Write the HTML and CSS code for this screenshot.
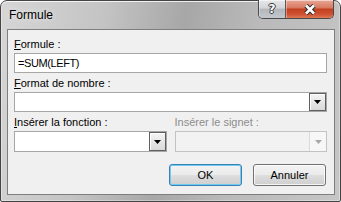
FILE: index.html
```html
<!DOCTYPE html>
<html>
<head>
  <title>Formule</title>
  <link rel="stylesheet" href="styles.css">
</head>
<body>
  <div class="window">
    <div class="titlebar">
      <span class="title">Formule</span>
      <div class="caption-buttons">
        <button class="cap-btn help">?</button>
        <button class="cap-btn close">
          <svg width="14" height="11" viewBox="0 0 14 11">
            <path d="M3 1.5L11 9.5M11 1.5L3 9.5" stroke="#2b2b2b" stroke-width="4.6" fill="none"/>
            <path d="M3 1.5L11 9.5M11 1.5L3 9.5" stroke="#ffffff" stroke-width="2.6" fill="none"/>
          </svg>
        </button>
      </div>
    </div>
    <div class="client">
      <label class="field-label"><u>F</u>ormule :</label>
      <input class="textbox" type="text" value="=SUM(LEFT)">
      <label class="field-label"><u>F</u>ormat de nombre :</label>
      <div class="combo">
        <span class="combo-btn">
          <svg width="7" height="4" viewBox="0 0 7 4"><path d="M0 0h7L3.5 4z" fill="#000"/></svg>
        </span>
      </div>
      <div class="pair">
        <div>
          <label class="field-label"><u>I</u>nsérer la fonction :</label>
          <div class="combo tall">
            <span class="combo-btn">
              <svg width="7" height="4" viewBox="0 0 7 4"><path d="M0 0h7L3.5 4z" fill="#000"/></svg>
            </span>
          </div>
        </div>
        <div>
          <label class="field-label disabled">Insérer le signet :</label>
          <div class="combo tall disabled">
            <span class="combo-btn">
              <svg width="7" height="4" viewBox="0 0 7 4"><path d="M0 0h7L3.5 4z" fill="#a8a8a8"/></svg>
            </span>
          </div>
        </div>
      </div>
      <div class="actions">
        <button class="btn default">OK</button>
        <button class="btn">Annuler</button>
      </div>
    </div>
  </div>
</body>
</html>
```

FILE: styles.css
```css
body {
  margin: 0;
  padding: 0;
  background-color: #ffffff;
  font-family: 'Liberation Sans', Arial, sans-serif;
}
.window {
  box-sizing: border-box;
  width: 341px;
  height: 202px;
  border: 1px solid #444444;
  border-radius: 7px 7px 2px 2px;
  background: linear-gradient(100deg, #d6d6d6 0%, #c4c4c4 28%, #a7a7a7 50%, #bababa 70%, #c6c6c6 100%);
  box-shadow: inset 0 1px 0 rgba(255, 255, 255, 0.7), inset 0 0 0 1px rgba(255, 255, 255, 0.35);
}
.titlebar {
  height: 28px;
  display: flex;
  justify-content: space-between;
  align-items: flex-start;
}
.title {
  padding-left: 8px;
  line-height: 28px;
  font-size: 12px;
  color: #000000;
  text-shadow: 0 0 6px rgba(255, 255, 255, 0.8);
}
.caption-buttons {
  display: flex;
  margin-top: -1px;
  margin-right: 6px;
  height: 19px;
  border: 1px solid #4a4a4a;
  border-top: none;
  border-radius: 0 0 5px 5px;
  overflow: hidden;
  box-sizing: border-box;
}
.cap-btn {
  border: none;
  padding: 0;
  margin: 0;
  height: 18px;
  display: flex;
  align-items: center;
  justify-content: center;
  box-shadow: inset 0 1px 0 rgba(255, 255, 255, 0.5), inset 1px 0 0 rgba(255, 255, 255, 0.35);
}
.help {
  width: 27px;
  border-right: 1px solid #5a5a5a;
  background: linear-gradient(#e6e8ea 0%, #d2d4d7 45%, #b3b6ba 52%, #c4c7cb 100%);
  font-family: 'DejaVu Sans', sans-serif;
  font-weight: bold;
  font-size: 12px;
  color: #ffffff;
  text-shadow: 1px 0 0 #333, -1px 0 0 #333, 0 1px 0 #333, 0 -1px 0 #333;
}
.close {
  width: 47px;
  background: linear-gradient(#e9a897 0%, #d97a62 42%, #c2411f 52%, #cf5133 80%, #de7a55 100%);
}
.client {
  box-sizing: border-box;
  height: 166px;
  margin: 0 5px 0 6px;
  padding: 8px 7px 0 6px;
  border: 1px solid #7e7e7e;
  background-color: #f0f0f0;
  font-size: 11px;
  color: #000000;
}
.field-label {
  display: block;
  line-height: 13px;
  height: 13px;
  margin-bottom: 2px;
  white-space: nowrap;
}
.field-label u {
  text-underline-offset: 1px;
}
.field-label.disabled {
  color: #8d8d8d;
}
.textbox {
  display: block;
  box-sizing: border-box;
  width: 100%;
  height: 20px;
  margin: 0 0 4px 0;
  padding: 0 3px;
  border: 1px solid #a6a6a6;
  background-color: #ffffff;
  font-family: 'Liberation Sans', Arial, sans-serif;
  font-size: 11px;
  letter-spacing: -0.4px;
  color: #000000;
  outline: none;
}
.combo {
  box-sizing: border-box;
  height: 20px;
  display: flex;
  justify-content: flex-end;
  border: 1px solid #a6a6a6;
  background-color: #ffffff;
  margin-bottom: 4px;
}
.combo.tall {
  height: 21px;
  margin-bottom: 0;
}
.combo-btn {
  box-sizing: border-box;
  width: 17px;
  height: 100%;
  display: flex;
  align-items: center;
  justify-content: center;
  border: 1px solid #5f5f5f;
  background: linear-gradient(#f4f4f4 0%, #e6e6e6 50%, #d9d9d9 100%);
  box-shadow: inset 1px 1px 0 #ffffff;
}
.combo.disabled {
  border-color: #c3c3c3;
  background-color: #f2f2f2;
}
.combo.disabled .combo-btn {
  border: none;
  border-left: 1px solid #dadada;
  background: #f7f7f7;
  box-shadow: none;
}
.pair {
  display: grid;
  grid-template-columns: 1fr 1fr;
  gap: 8px;
}
.actions {
  display: flex;
  justify-content: flex-end;
  gap: 11px;
  margin-top: 12px;
  padding-right: 1px;
}
.btn {
  box-sizing: border-box;
  width: 73px;
  height: 22px;
  padding: 0;
  border: 1px solid #707070;
  border-radius: 3px;
  background: linear-gradient(#f3f3f3 0%, #ebebeb 48%, #dddddd 52%, #cfcfcf 100%);
  box-shadow: inset 0 0 0 1px rgba(255, 255, 255, 0.8);
  font-family: 'Liberation Sans', Arial, sans-serif;
  font-size: 11px;
  color: #000000;
}
.btn.default {
  border-color: #3c7fb1;
  box-shadow: inset 0 0 0 1px #6fcdf4;
}
```
